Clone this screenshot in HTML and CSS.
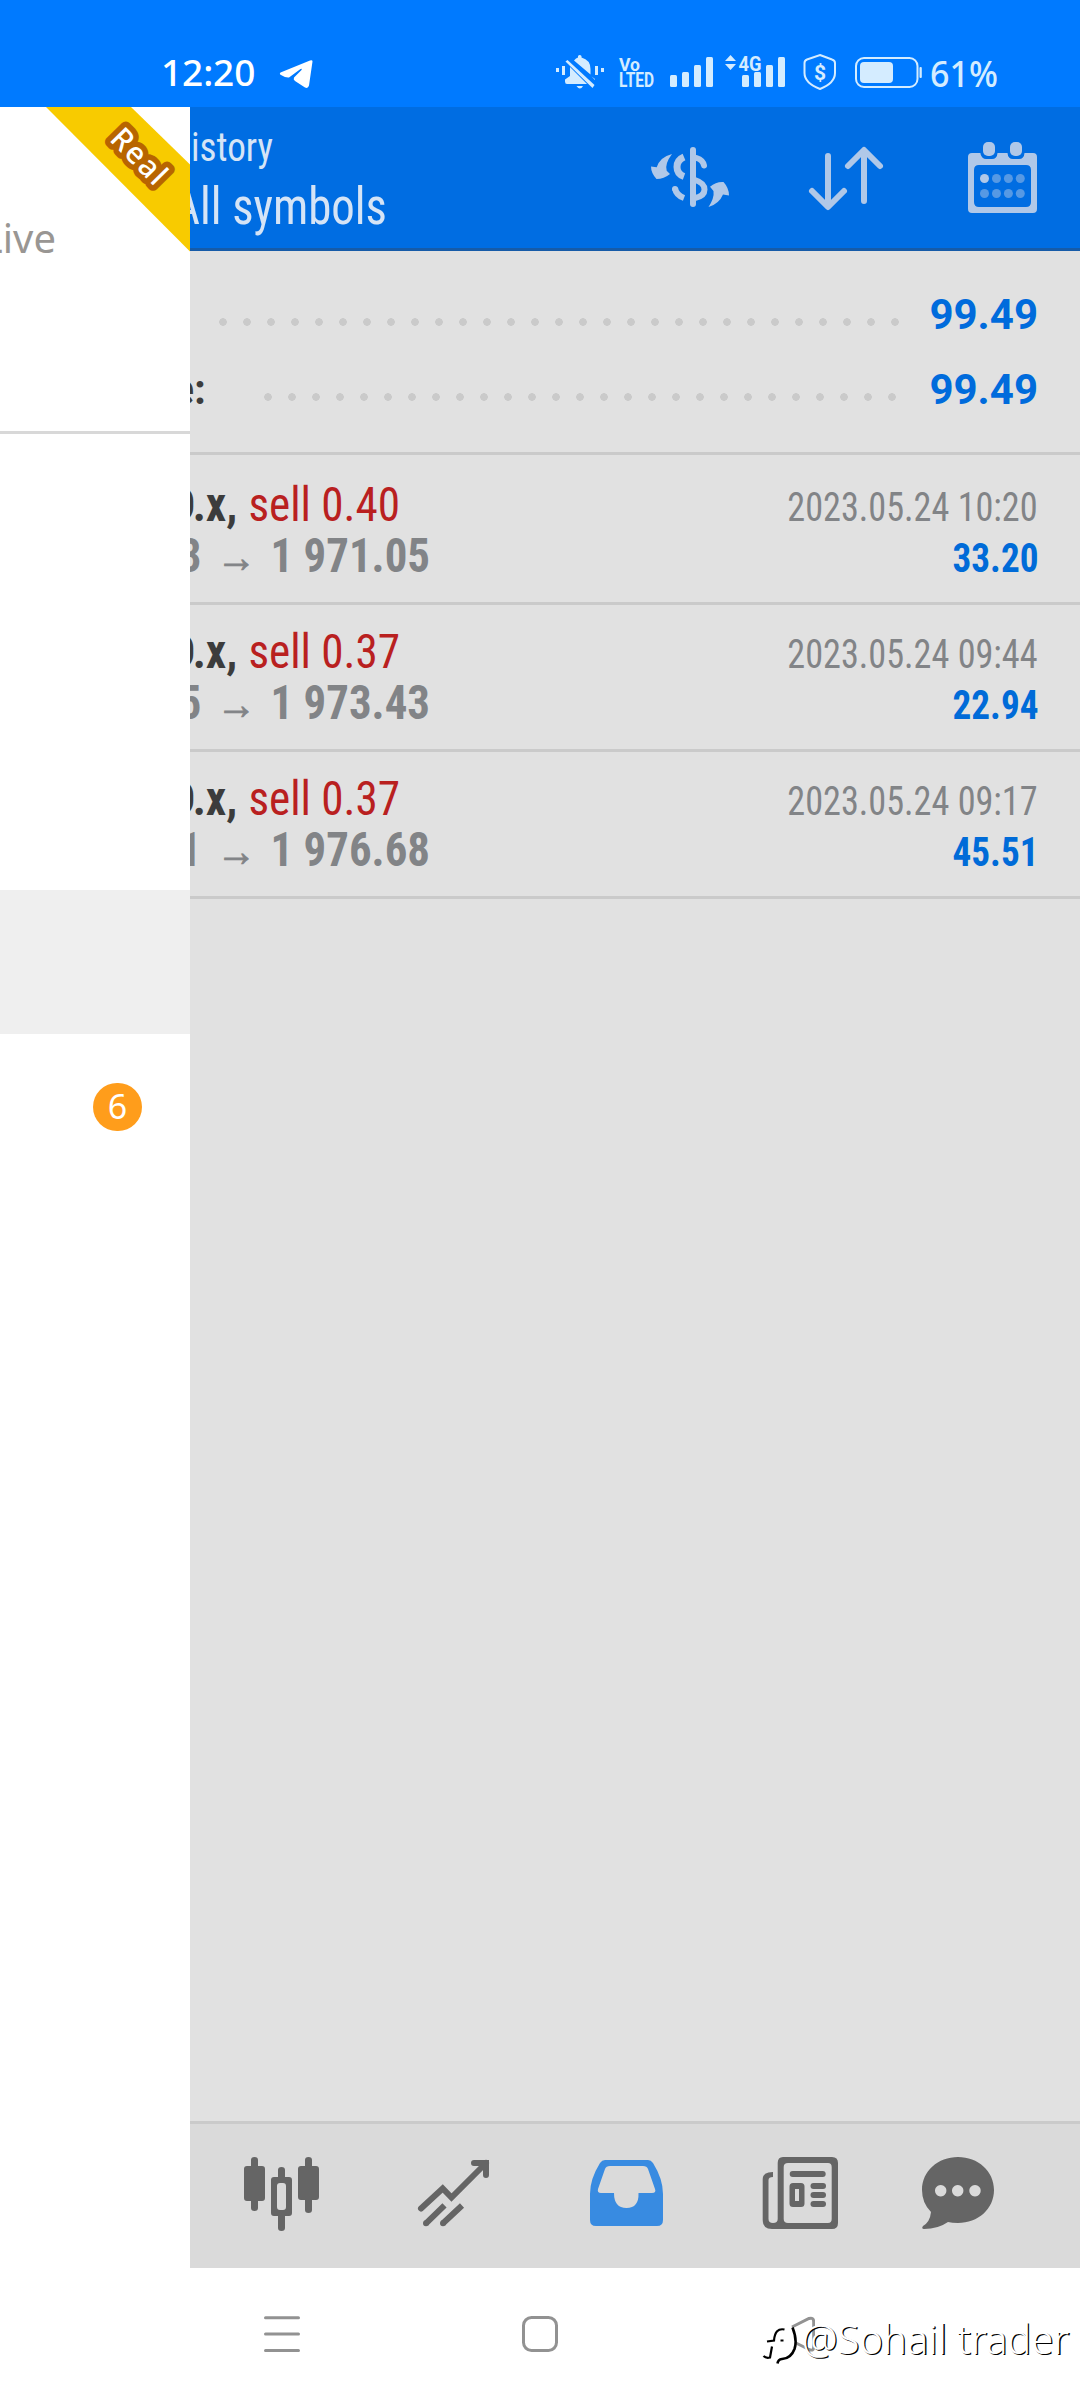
FILE: index.html
```html
<!DOCTYPE html>
<html lang="en">
<head>
<meta charset="utf-8">
<title>History</title>
<link rel="stylesheet" href="styles.css">
</head>
<body>
<div class="screen">
  <header class="status">
    <span class="clock">12:20</span>
    <svg class="telegram" width="34" height="30" viewBox="279 59 34 30"><path d="M280.500 72.500Q279 74 281 75Q286 78 289 77.500L300.500 69Q302.500 68 301.500 70L294 77.500Q293 79.500 295 81L305 87.500Q308 89 309 85.500L312.500 61.500Q312.500 59.500 310 60.500Z"/></svg>
    <svg class="status-icons" width="368" height="38" viewBox="555 53 368 38">
      <g class="fill">
        <path d="M574 60.500Q576 58 578 57.500V56Q579.800 54 581.500 56V57.500Q590.500 60 590.500 69V74.500Z"/>
        <path d="M570 67L587 84H567Q565 84 565 81.500V79.500L570 76Z"/>
        <path d="M591.500 76.500L595 79V80Z"/>
        <path d="M576.500 86H583Q580 91 576.500 86Z"/>
        <path d="M567.500 60L594.500 85L592.500 88L565.500 61.500Z"/>
        <path d="M556 68h3v4h-3zM562 66h3v9h-3zM595 66h3v9h-3zM601 68h3v4h-3z"/>
        <rect x="670" y="75" width="7" height="12" rx="1.500"/><rect x="682" y="72" width="7" height="15" rx="1.500"/><rect x="694" y="65" width="7" height="22" rx="1.500"/><rect x="706" y="57" width="7" height="30" rx="1.500"/>
        <path d="M730.500 55L736 61H725ZM725 64H736L730.500 70Z"/>
        <rect x="742" y="75" width="7" height="12" rx="1.500"/><rect x="754" y="72" width="7" height="15" rx="1.500"/><rect x="766" y="65" width="7" height="22" rx="1.500"/><rect x="778" y="57" width="7" height="30" rx="1.500"/>
        <rect x="860" y="62" width="33" height="21" rx="4"/><rect x="919.500" y="67" width="2.300" height="11" rx="1"/>
      </g>
      <text class="mini" x="619" y="71" font-size="19" textLength="21" lengthAdjust="spacingAndGlyphs">Vo</text>
      <text class="mini" x="619" y="87" font-size="19.500" textLength="35" lengthAdjust="spacingAndGlyphs">LTED</text>
      <text class="mini" x="738.500" y="71" font-size="21" textLength="23" lengthAdjust="spacingAndGlyphs">4G</text>
      <g class="line">
        <path stroke-width="2" d="M820 55L832 59.500Q835 60.500 835 63V73Q835 83 820 89Q804.500 83 804.500 73V63Q804.500 60.500 807 59.500Z"/>
        <rect x="856" y="58" width="61.500" height="29" rx="8" stroke-width="2"/>
      </g>
      <text class="mini" x="820" y="79.500" font-size="21" text-anchor="middle">$</text>
    </svg>
    <span class="battery">61%</span>
  </header>

  <div class="body">
    <aside class="drawer">
      <div class="account">
        <svg class="ribbon" width="190" height="146" viewBox="0 107 190 146"><path fill="#f8cb00" d="M46 107H131L190 164.500V251.500Z"/><text class="real" transform="translate(108.500 140) rotate(45.500)" textLength="66">Real</text></svg>
        <span class="live">Live</span>
      </div>
      <div class="selected"></div>
      <span class="badge">6</span>
    </aside>

    <main class="main">
      <div class="toolbar">
        <div class="titles">
          <span class="sub">istory</span>
          <span class="title">All symbols</span>
        </div>
        <svg class="tools" width="390" height="80" viewBox="649 139 390 80">
          <rect x="690" y="147" width="6" height="60" rx="3" class="tool"/>
          <g class="tool-line">
            <path stroke-width="7" stroke-linecap="butt" d="M684 157Q677 160 677 167T684 176.500"/>
            <path stroke-width="6" stroke-linecap="butt" d="M675 188Q676 195 684 198"/>
            <path stroke-width="6" d="M696.500 158Q703 160 704 165.500"/>
            <path stroke-width="6" stroke-linecap="butt" d="M695 180Q704.500 183 704.500 189.500T695 198"/>
            <path stroke-width="6" d="M828 156V206M812 191L828 207L844 191M864 151V201M848 166L864 150L880 166"/>
          </g>
          <circle cx="675" cy="189" r="3" class="tool"/>
          <path class="tool" d="M672 154Q660 157 656.700 167.300L651 166.500Q651 173 656.500 179Q664 179 670 174L666.700 170.700Q664.500 164 672 154Z"/>
          <path class="tool" d="M708.500 207Q719 204 723 194.500L729 195.500Q729 188 723.500 182Q716 181.500 710 186.700L713.500 191Q714.500 198 708.500 207Z"/>
          <path class="tool" fill-rule="evenodd" d="M972 153H980.500V154Q982 159 986 159H992Q997 159 997.500 153H1007.500Q1008 159 1013 159H1019Q1024 159 1024.500 153H1033Q1037 153 1037 157V209Q1037 213 1033 213H972Q968 213 968 209V157Q968 153 972 153ZM979 165Q974 165 974 170V202Q974 207 979 207H1026Q1031 207 1031 202V170Q1031 165 1026 165Z"/>
          <rect class="tool" x="983" y="142" width="12" height="14" rx="5"/><rect class="tool" x="1010" y="142" width="12" height="14" rx="5"/>
          <circle class="tool" cx="984.500" cy="178.500" r="4.500"/>
          <g fill="#5699e4"><circle cx="996.500" cy="178.500" r="4.500"/><circle cx="1008.400" cy="178.500" r="4.500"/><circle cx="1020.300" cy="178.500" r="4.500"/><circle cx="984.500" cy="193.500" r="4.500"/><circle cx="996.500" cy="193.500" r="4.500"/><circle cx="1008.400" cy="193.500" r="4.500"/><circle cx="1020.300" cy="193.500" r="4.500"/></g>
        </svg>
      </div>

      <section class="summary">
        <div class="sum-row"><i class="dots first"></i><b>99.49</b></div>
        <div class="sum-row"><span class="label">e:</span><i class="dots second"></i><b>99.49</b></div>
      </section>

      <section class="deal">
        <div class="line1"><div class="left"><b>D.x,</b><span class="sell">sell 0.40</span></div><time>2023.05.24 10:20</time></div>
        <div class="line2"><div class="left"><b>3</b><span class="arrow">→</span><b>1 971.05</b></div><strong>33.20</strong></div>
      </section>
      <section class="deal">
        <div class="line1"><div class="left"><b>D.x,</b><span class="sell">sell 0.37</span></div><time>2023.05.24 09:44</time></div>
        <div class="line2"><div class="left"><b>5</b><span class="arrow">→</span><b>1 973.43</b></div><strong>22.94</strong></div>
      </section>
      <section class="deal">
        <div class="line1"><div class="left"><b>D.x,</b><span class="sell">sell 0.37</span></div><time>2023.05.24 09:17</time></div>
        <div class="line2"><div class="left"><b>1</b><span class="arrow">→</span><b>1 976.68</b></div><strong>45.51</strong></div>
      </section>

      <nav class="tabs">
        <svg width="76" height="76" viewBox="243 2156 76 76" class="tab"><path d="M247 2166h4v-6q0-3 3.500-3t3.500 3v6h4q3 0 3 3v29q0 3-3 3h-4v7q0 3-3.500 3t-3.500-3v-7h-4q-3 0-3-3v-29q0-3 3-3zM301 2166h4v-6q0-3 3.500-3t3.500 3v6h4q3 0 3 3v28q0 3-3 3h-4v10q0 3-3.500 3t-3.500-3v-10h-4q-3 0-3-3v-28q0-3 3-3z"/><path fill-rule="evenodd" d="M274 2177h4v-7q0-3 3.500-3t3.500 3v7h4q3 0 3 3v33q0 3-3 3h-4v12q0 3-3.500 3t-3.500-3v-12h-4q-3 0-3-3v-33q0-3 3-3zm6 6q-3 0-3 3v21q0 3 3 3h3q3 0 3-3v-21q0-3-3-3z"/></svg>
        <svg width="76" height="76" viewBox="416 2156 76 76" class="tab-line"><path d="M421 2208.500L442.700 2188.500L451.500 2197.500L486 2163M474 2163H486V2175"/><path stroke-linecap="butt" d="M426 2223.300L444.500 2205.300M443 2223.300L462 2205.500"/><path d="M426 2223.200v.1M443 2223.200v.1"/></svg>
        <svg width="76" height="76" viewBox="588 2156 76 76"><path fill="#388be1" fill-rule="evenodd" d="M605 2160H648Q651 2160 653 2163Q663 2179 663 2194V2220Q663 2226 657 2226H596Q590 2226 590 2220V2194Q590 2179 600 2163Q602 2160 605 2160ZM610 2166Q606 2166 605 2169L598 2189Q597 2193 601 2193H614Q614 2208 626.500 2208T638.500 2193H652Q656.500 2193 655 2189L648 2169Q647 2166 643 2166Z"/></svg>
        <svg width="78" height="76" viewBox="761 2156 78 76" class="tab"><path fill-rule="evenodd" d="M783 2157H832Q838 2157 838 2163V2223Q838 2229 832 2229H772Q762.700 2229 762.700 2220V2179Q762.700 2172 773 2172V2177Q768.500 2177 768.500 2180V2219Q768.500 2223 773 2223Q777.700 2223 777.700 2219V2163Q777.700 2157 783 2157ZM788 2163Q783.700 2163 783.700 2167V2219Q783.700 2223 788 2223H828Q831.700 2223 831.700 2219V2167Q831.700 2163 828 2163Z"/><path fill-rule="evenodd" d="M793 2183h8q3.500 0 3.500 3.500v17q0 3.500-3.500 3.500h-8q-3.500 0-3.500-3.500v-17q0-3.500 3.500-3.500zm2 6v12h4v-12z"/><rect x="789.700" y="2171" width="36" height="6" rx="3"/><rect x="810.500" y="2183" width="15.500" height="6" rx="3"/><rect x="810.500" y="2192" width="15.500" height="6" rx="3"/><rect x="810.500" y="2201" width="15.500" height="6" rx="3"/></svg>
        <svg width="76" height="76" viewBox="920 2156 76 76" class="tab"><path fill-rule="evenodd" d="M958 2157C978 2157 994 2171 994 2190S978 2223 958 2223Q952 2223 948 2222Q938 2229 924 2229Q921 2228.500 923 2226Q930 2222 931 2212Q922 2203 922 2190C922 2171 938 2157 958 2157ZM940.700 2185a5.700 5.700 0 1 0 .01 0zM957.700 2185a5.700 5.700 0 1 0 .01 0zM975 2185a5.700 5.700 0 1 0 .01 0z"/></svg>
      </nav>
    </main>
  </div>

  <footer class="navbar">
    <svg class="nav-icons" width="552" height="44" viewBox="263 2312 552 44"><path d="M265.500 2317.700H298.500M265.500 2334H298.500M265.500 2350.400H298.500"/><rect x="523.500" y="2317.500" width="33" height="33" rx="8"/><path stroke-linecap="butt" d="M792 2327L809 2318.500Q813.700 2317 813.700 2322V2347Q813.700 2351.500 809 2349.500L796 2343"/></svg>
    <div class="watermark">
      <svg width="36" height="44" viewBox="762 2323 36 44"><path fill="none" stroke="#000" stroke-width="2.200" d="M784.500 2329.500Q775 2327.500 774 2340.500L767 2341.500M772 2346.500L770 2357.500Q766 2358.500 763.500 2356"/><path fill="none" stroke="#000" stroke-width="2.600" d="M792.500 2327.500Q797.500 2340 794.500 2349Q791 2358.500 782 2359Q778 2359.500 777.500 2363.500"/><path d="M780.500 2339.500h3v2h-3z"/></svg>
      <span>@Sohail trader</span>
    </div>
  </footer>
</div>
</body>
</html>
```
FILE: styles.css
```css
* { box-sizing: border-box; }
body { margin: 0; background: #fff; }
.screen { width: 1080px; height: 2400px; display: flex; flex-direction: column; overflow: hidden; font-family: "Roboto Condensed", Roboto, sans-serif; font-stretch: 75%; }
svg { display: block; flex: none; }

.status { height: 107px; background: #007aff; display: flex; align-items: flex-start; color: #fff; font-family: "Noto Sans", sans-serif; font-stretch: normal; }
.clock { width: 117px; padding: 46px 0 0 0; margin-left: 161px; font-size: 37px; line-height: 52px; font-weight: 500; white-space: nowrap; letter-spacing: -0.1px; }
.telegram { margin: 59px 0 0 1px; fill: #fff; }
.status-icons { margin: 53px 0 0 242px; }
.status-icons .fill, .mini { fill: #d4ecff; }
.mini { font-family: Roboto, sans-serif; font-weight: 700; }
.status-icons .line { fill: none; stroke: #d4ecff; }
.battery { margin: 47px 0 0 7px; font-size: 37px; line-height: 52px; color: #d4ecff; font-weight: 500; transform: scaleX(0.92); transform-origin: left; }

.body { height: 2161px; display: flex; }
.drawer { width: 190px; background: #fff; display: flex; flex-direction: column; overflow: hidden; font-family: "Noto Sans", sans-serif; font-stretch: normal; }
.account { height: 327px; border-bottom: 3px solid #d8d8d8; position: relative; }
.ribbon { position: absolute; left: 0; top: 0; }
.real { font-family: "Noto Sans", sans-serif; font-size: 30px; font-weight: 500; fill: #fff; stroke: #b86500; stroke-width: 11px; stroke-linejoin: round; paint-order: stroke; }
.live { display: block; width: 56px; padding-top: 104px; font-size: 40px; line-height: 54px; color: #999693; direction: rtl; white-space: nowrap; }
.selected { height: 144px; margin-top: 456px; background: #efefef; }
.badge { width: 49px; height: 48px; margin: 49px 0 0 93px; border-radius: 24px; background: #ff9d1b; color: #fff; font-size: 34px; line-height: 47px; text-align: center; }

.main { width: 890px; background: #e1e1e1; display: flex; flex-direction: column; overflow: hidden; }
.toolbar { height: 144px; background: #006de2; border-bottom: 3px solid #165ba8; display: flex; justify-content: space-between; padding-right: 41px; overflow: hidden; }
.titles { display: flex; flex-direction: column; align-items: flex-start; color: #d5e4f6; white-space: nowrap; }
.sub { font-size: 40px; line-height: 48px; margin: 17px 0 0 1px; transform: scaleX(0.93); transform-origin: left; }
.title { font-size: 52px; line-height: 60px; margin: 5px 0 0 -17px; transform: scaleX(0.9); transform-origin: left; }
.tools { margin-top: 32px; }
.tool { fill: #b0c8e8; }
.tool-line { fill: none; stroke: #b0c8e8; stroke-linecap: round; stroke-linejoin: round; }

.summary { height: 204px; padding: 26px 42px 0 0; border-bottom: 3px solid #cacaca; }
.sum-row { height: 75px; display: flex; align-items: center; justify-content: flex-end; }
.sum-row b { width: 107px; font: 700 42px/50px Roboto, sans-serif; font-stretch: normal; color: #006bdc; display: flex; justify-content: flex-end; }
.label { font-size: 42px; font-weight: 700; color: #3c3c3c; width: 66px; margin-right: auto; margin-left: -16px; }
.dots { height: 8px; margin-top: 15px; background: radial-gradient(circle at 12px 4px, #cacaca 3.500px, transparent 4.100px) 0 0 / 24px 8px repeat-x; }
.first { width: 696px; margin-right: 24px; }
.second { width: 648px; margin-right: 27px; }

.deal { height: 147px; padding: 21px 42px 0 0; border-bottom: 3px solid #cacaca; white-space: nowrap; color: #828487; }
.deal:nth-of-type(2) { height: 150px; padding-top: 24px; }
.line1, .line2 { display: flex; justify-content: space-between; align-items: baseline; height: 51px; line-height: 51px; font-size: 48px; }
.left { display: flex; justify-content: flex-end; align-items: baseline; transform: scaleX(0.94); transform-origin: right; }
.line1 .left { width: 210px; }
.line2 .left { width: 240px; transform: scaleX(0.935); }
.line1 b { color: #3c3c3c; margin-right: 12px; }
.sell { color: #b9201f; }
time { font-size: 40px; transform: scaleX(0.905); transform-origin: right; }
strong { font-size: 40px; color: #006bd8; transform: scaleX(0.93); transform-origin: right; }
.arrow { font: 43px "Liberation Sans", sans-serif; line-height: 40px; margin: 0 15px 0 16px; -webkit-text-stroke: 0.8px #828487; }

.tabs { margin-top: auto; height: 147px; background: #dadada; border-top: 3px solid #cacaca; display: flex; align-items: flex-start; padding: 32px 0 0 53px; }
.tabs svg + svg { margin-left: 97px; }
.tabs svg:nth-child(3) { margin-left: 96px; }
.tabs svg:nth-child(5) { margin-left: 81px; }
.tab { fill: #656565; }
.tab-line { fill: none; stroke: #656565; stroke-width: 6; stroke-linecap: round; stroke-linejoin: miter; }

.navbar { height: 132px; display: flex; position: relative; }
.nav-icons { margin: 44px 0 0 263px; fill: none; stroke: #929292; stroke-width: 3; stroke-linecap: round; }
.watermark { position: absolute; left: 762px; top: 55px; display: flex; align-items: flex-start; }
.watermark span { margin-left: 4px; margin-top: -11px; font: 300 40px/54px "Noto Sans", sans-serif; color: #fff; text-shadow: 1.300px 1.300px 0 #000; white-space: nowrap; }
```
